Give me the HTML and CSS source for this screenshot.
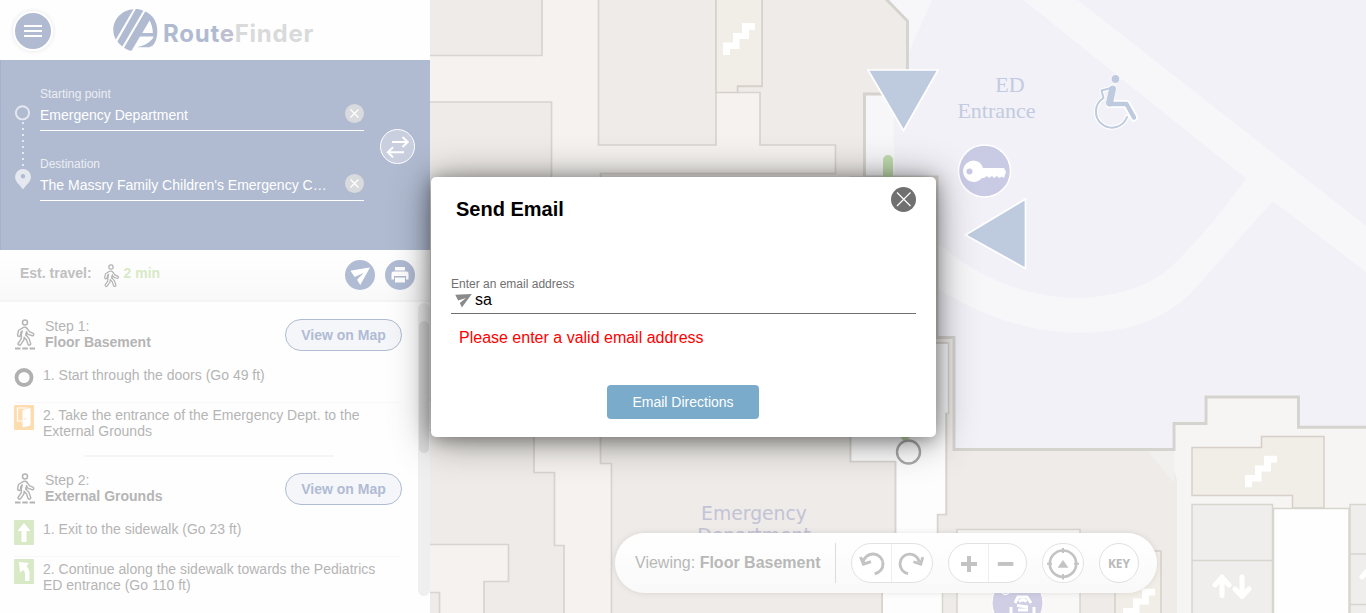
FILE: index.html
```html
<!DOCTYPE html>
<html lang="en">
<head>
<meta charset="utf-8">
<title>RouteFinder</title>
<link rel="stylesheet" href="styles.css">
</head>
<body>
<svg class="defs" width="0" height="0">
  <symbol id="stairs" viewBox="0 0 32 32"><path d="M0 19.5H10V10H19V0H32V7H26V16H16.5V26H7V32H0Z" fill="#fff"/></symbol>
  <symbol id="walker" viewBox="0 0 20 28">
    <g fill="none" stroke-linejoin="round" stroke-linecap="round">
      <circle cx="10" cy="3.500" r="2.500" stroke="#b4b4b4" stroke-width="1.500"/>
      <g stroke="#b4b4b4"><path d="M9.800 10.500 8.500 16" stroke-width="6"/><path d="M8.500 10 4.800 12.200 4 16M11.500 11 13.800 14 17.300 15.400M8 16.500 7.500 20.500 4.500 24.800M9.500 16.500 12.800 20.300 14.300 24.800" stroke-width="4.200"/></g>
      <g stroke="#fdfdfd"><path d="M9.800 10.500 8.500 16" stroke-width="3.200"/><path d="M8.500 10 4.800 12.200 4 16M11.500 11 13.800 14 17.300 15.400M8 16.500 7.500 20.500 4.500 24.800M9.500 16.500 12.800 20.300 14.300 24.800" stroke-width="1.400"/></g>
      <path d="M7 12 6.300 16M11.800 12.500 10.800 16.500" stroke="#b4b4b4" stroke-width="1.200"/>
    </g>
  </symbol>
  <symbol id="plane" viewBox="0 0 20 17"><path d="M0 1 20 0 8 16.500 5.500 10.800 13 4.800 3.500 7.800Z"/></symbol>
</svg>
<div class="app">
  <aside class="sidebar">
    <header class="brand">
      <button class="menu" aria-label="Menu"><span></span><span></span><span></span></button>
      <div class="logo">
        <svg width="45" height="43" viewBox="0 0 45 43">
          <path d="M20.500.2C9 .8.300 10 .3 21c0 3.500.8 6.300 2.500 9.500ZM22.800.1 4.400 32.600c1.600 2.200 3 3.500 4.900 4.900L30.300 1.700C28 .6 25.500.1 22.800.1ZM32.200 2.500 11 38.800c2.200 1.600 4.800 2.700 7.500 3L27 27.500H40.500L38.500 37.800C42.500 34 44.300 29 44.300 22 44.300 12.500 39.500 5.500 32.200 2.500Z" fill="#b0bbd1"/>
          <path d="M29.300 24 36.600 11.500Q39.700 17 39.800 24Z" fill="#fff"/>
          <path d="M41 27.500C38 33 31 37 24 38.200H36.500L40 36Z" fill="#b0bbd1"/>
        </svg>
        <div class="logo-text">Rout<span class="mid">e</span><span class="gray">Finder</span></div>
      </div>
    </header>
    <section class="search">
      <svg class="route-line" width="18" height="90" viewBox="0 0 18 90">
        <circle cx="8.500" cy="8.800" r="6.600" fill="none" stroke="#e5e8ef" stroke-width="1.900"/>
        <path d="M9 18V64" stroke="#e5e8ef" stroke-width="2" stroke-dasharray="2 4"/>
        <path fill-rule="evenodd" d="M9 65a7.900 7.900 0 0 0-7.900 7.900C1.100 78 5.500 80 9 85.500 12.500 80 16.900 78 16.900 72.900A7.900 7.900 0 0 0 9 65Zm0 5a2.200 2.200 0 1 1 0 4.400 2.200 2.200 0 0 1 0-4.400Z" fill="#e5e8ef"/>
      </svg>
      <div class="fields">
        <div class="field"><label>Starting point</label><div class="value"><span>Emergency Department</span>
          <svg width="19" height="19" viewBox="0 0 19 19"><circle cx="9.500" cy="9.500" r="9.500" fill="#d9dadd"/><path d="M5.500 5.500 13.500 13.500M13.500 5.500 5.500 13.500" stroke="#fff" stroke-width="1.200"/></svg></div></div>
        <div class="field"><label>Destination</label><div class="value"><span>The Massry Family Children's Emergency C…</span>
          <svg width="19" height="19" viewBox="0 0 19 19"><circle cx="9.500" cy="9.500" r="9.500" fill="#d9dadd"/><path d="M5.500 5.500 13.500 13.500M13.500 5.500 5.500 13.500" stroke="#fff" stroke-width="1.200"/></svg></div></div>
      </div>
      <svg class="swap" width="35" height="35" viewBox="0 0 35 35"><circle cx="17.500" cy="17.500" r="17" fill="#cacfdf" stroke="#fff"/><path d="M12 13H27.500M22.500 8 27.800 13 22.500 18M24 23.300H8M13 18.300 7.800 23.300 13 28.300" fill="none" stroke="#fff" stroke-width="1.900"/></svg>
    </section>
    <section class="travel">
      <b>Est. travel:</b>
      <svg class="travel-icon" width="18" height="24"><use href="#walker"/></svg>
      <b class="mins">2 min</b>
      <svg class="round" width="30" height="30" viewBox="0 0 30 30"><circle cx="15" cy="15" r="15" fill="#b0bbd4"/><g transform="rotate(-7 15 15)"><use href="#plane" x="6" y="8.500" width="20" height="17" fill="#fff"/></g></svg>
      <svg class="round" width="30" height="30" viewBox="0 0 30 30"><circle cx="15" cy="15" r="15" fill="#b0bbd4"/><path d="M10 7H20V10.500H10ZM8.500 11.500H21.500Q23.500 11.500 23.500 13.500V19.500H21V16H9V19.500H6.500V13.500Q6.500 11.500 8.500 11.500ZM10 17.500H20V22.500H10Z" fill="#fff"/></svg>
    </section>
    <section class="steps">
      <div class="scroll"><i></i></div>
      <div class="step-head">
        <svg width="20" height="31" viewBox="0 0 20 31"><use href="#walker" width="20" height="28"/><path d="M0 29.500H20" stroke="#b4b4b4" stroke-width="1.800" stroke-dasharray="5.500 1.800"/></svg>
        <div class="title">Step 1:<b>Floor Basement</b></div><button class="view">View on Map</button>
      </div>
      <div class="item first"><svg width="20" height="25" viewBox="0 0 20 25"><circle cx="10" cy="11.500" r="7.500" fill="none" stroke="#b0b0b0" stroke-width="3.800"/></svg><p>1. Start through the doors (Go 49 ft)</p></div>
      <div class="item"><svg width="20" height="25" viewBox="0 0 20 25"><rect width="20" height="25" rx="1" fill="#fdddb0"/><path d="M8 16H3.500V3H13.500" fill="none" stroke="#fff" stroke-width="1.200"/><path d="M8.500 5 16.500 3V20.500L8.500 22.500Z" fill="#fff"/><circle cx="11" cy="14" r=".8" fill="#fdddb0"/></svg><p>2. Take the entrance of the Emergency Dept. to the External Grounds</p></div>
      <div class="rule"></div>
      <div class="step-head">
        <svg width="20" height="31" viewBox="0 0 20 31"><use href="#walker" width="20" height="28"/><path d="M0 29.500H20" stroke="#b4b4b4" stroke-width="1.800" stroke-dasharray="5.500 1.800"/></svg>
        <div class="title">Step 2:<b>External Grounds</b></div><button class="view">View on Map</button>
      </div>
      <div class="item first"><svg width="20" height="25" viewBox="0 0 20 25"><rect width="20" height="25" rx="1" fill="#d8e9c6"/><path d="M10 3 16.500 11H12.500V22H7.500V11H3.500Z" fill="#fff"/></svg><p>1. Exit to the sidewalk (Go 23 ft)</p></div>
      <div class="item last"><svg width="20" height="25" viewBox="0 0 20 25"><rect width="20" height="25" rx="1" fill="#d8e9c6"/><path d="M5 3 15 4 12.500 7.500Q15.500 10 15.500 14V22H11V15Q11 12 9 11L6 13.500Z" fill="#fff"/></svg><p>2. Continue along the sidewalk towards the Pediatrics ED entrance (Go 110 ft)</p></div>
    </section>
  </aside>
  <main class="map">
    <svg width="936" height="613" viewBox="430 0 936 613">
      <rect x="430" width="936" height="613" fill="#f5f2ef"/>
      <!-- rooms -->
      <g fill="#eeebe8" stroke="#d8d4d1" stroke-width="1.700">
        <path d="M420-5H542V55.500H420ZM420 102H551.500V400H420ZM598.500-5H716V145H598.500Z"/>
        <path d="M762-5V86.500H737.500V92.500H760V145H835.500V173.500H600.500V463.500H611.500V620H882.500V540H895.500V461.500H850.500V177H864V94H908V21L887-5Z"/>
        <path d="M420 430H534V472.500H554.500V545.500H564V620H484V581.500H508.500V544.500H420ZM420 592.500H439.500V620H420Z"/>
        <path d="M930 337H960V449H1185V620H942V540H937.500V514.500H946.500V343H930Z"/>
      </g>
      <path d="M851.500 430H936V343.500H948V413H946V514H937V540H942V613H883V540H896.500V461H851.500Z" fill="#fdfdfd"/>
      <path d="M936 343H948.500V413.500H946V514.500H937.500V540H942.500V613M882 613V540H895.500V461.500H850.500V430" fill="none" stroke="#d8d5d0" stroke-width="1.500"/>
      <path d="M1174 424H1206V397H1298V427H1370V620H1177V480L1174 470Z" fill="#f6f5f3"/>
      <path d="M1147 450H1174V483Z" fill="#f1f0ee"/>
      <!-- grounds and roads -->
      <path d="M887-2 907.500 21V94H864.500V177H937V337.500H954V449.500H1174V423.500H1206V397H1298.500V427.200H1370V-2Z" fill="#f2f1f7"/>
      <g fill="#f7f7fa">
        <path d="M1021-2H1075L1366 226V272L1273 201 1192 292C1162 322 1122 333 1078 333 1025 332 978 314 937 288V242C975 276 1025 298 1080 298 1115 296 1146 288 1170 268Q1206 234 1246 178.500Z"/>
        <path d="M889 0H932L909 52V21ZM866 95H900Q892 110 893.500 140L895 177H866Z"/>
      </g>
      <path d="M885-2 907.500 21V94H864.500V177H937V337.500H954V449.500H1174V423.500H1206V397H1298.500V427.200H1370" fill="none" stroke="#d5d3cd" stroke-width="2.900"/>
      <rect x="883" y="155" width="10" height="40" rx="5" fill="#c0dbae"/>
      <!-- stairwells, lifts and small rooms -->
      <g fill="#f0eee6" stroke="#d6cfca" stroke-width="1.500">
        <path d="M716-5V92.500H737.500V86H762V-5ZM1192 447.500H1261.500V436.500H1324V508H1292.500V495.500H1192ZM1115 551H1161V620H1115Z"/>
      </g>
      <g fill="#efeeed" stroke="#d8d5ce" stroke-width="1.500">
        <path d="M1192 504.500H1272.500V560.500H1192ZM1192 560.500H1272.500V620H1192ZM1350 504.500H1370V554H1350ZM1350 554H1370V604.500H1350ZM1350 604.500H1370V620H1350Z"/>
        <path d="M1273.500 508.500H1349V620H1273.500Z" fill="#fefefe"/>
        <path d="M957 529.500H1080V620H957Z" fill="#faf8f6"/>
      </g>
      <use href="#stairs" x="723" y="23" width="32" height="32"/><use href="#stairs" x="1245" y="455.500" width="32" height="32"/><use href="#stairs" x="1123" y="588.500" width="32" height="32"/>
      <path d="M1222 595.500V577M1215 585 1222 577.500 1229 585M1242 577V595.500M1235 589 1242 596.500 1249 589M1362 577L1370 568" fill="none" stroke="#fff" stroke-width="5" stroke-linecap="round" stroke-linejoin="round"/>
      <!-- map markers -->
      <g fill="#becbdf" stroke="#fff" stroke-width="1.700">
        <path d="M868 70H938L903.500 130.500ZM1025.500 199V268.500L965.500 235Z"/>
      </g>
      <text x="1010" y="92" text-anchor="middle" class="serif">ED</text><text x="996.500" y="118" text-anchor="middle" class="serif">Entrance</text>
      <g fill="none" stroke-linecap="round" stroke-linejoin="round">
        <g stroke="#fff"><path d="M1112.500 88.500 1109.500 104H1126.500L1134 117.500" stroke-width="8"/><path d="M1111 88 1101.500 90.500 1103.500 98A16 16 0 1 0 1127 117" stroke-width="4.200"/></g>
        <g stroke="#becbdf"><path d="M1111 88 1101.500 90.500 1103.500 98A16 16 0 1 0 1127 117" stroke-width="2"/><path d="M1109.500 104H1126.500L1134 117.500" stroke-width="4.500"/><path d="M1112.500 89 1109.500 103" stroke-width="7"/></g>
        <circle cx="1115.500" cy="79" r="4.500" fill="#becbdf" stroke="#fff"/>
      </g>
      <circle cx="984.500" cy="171" r="26" fill="#c9cae4" stroke="#fff" stroke-width="1.500"/>
      <path fill-rule="evenodd" d="M973.500 160.500A10.700 10.700 0 1 0 982 178H984L987 176 989 178 992 176 994 178 997 176 999 178 1002 176.500 1004 178 1006 172 1004 168H983A10.700 10.700 0 0 0 973.500 160.500ZM969.500 168.500A3 3 0 1 1 969.500 174.500 3 3 0 0 1 969.500 168.500Z" fill="#fff"/>
      <text x="754" y="520" text-anchor="middle" class="room">Emergency</text><text x="754" y="542" text-anchor="middle" class="room">Department</text>
      <circle cx="1017.500" cy="603" r="25.500" fill="#cfcee4" stroke="#fff"/>
      <path d="M1015 603 1018 597H1027L1031 603M1019 601.500Q1023 598.500 1026.500 601.500M1017 605.500 1028 607M1018 610H1028M1011 607V613M1034 607V613" fill="none" stroke="#fff" stroke-width="3"/><circle cx="1005.500" cy="590.500" r="4" fill="none" stroke="#fff" stroke-width="1.300"/>
      <path d="M900 436Q903 441 905 442L911 436" fill="#b9d6a5"/><circle cx="908.500" cy="452" r="11.500" fill="#fff" fill-opacity=".5" stroke="#aaa9a9" stroke-width="2.400"/>
    </svg>
    <div class="toolbar">
      <span class="viewing">Viewing: <b>Floor Basement</b></span><i class="sep"></i>
      <div class="pill undo">
        <svg width="39" height="38" viewBox="0 0 39 38"><path d="M11.200 18A10 10 0 1 1 22.700 29.800M8.500 13 11.500 20.200 19 17.700" fill="none" stroke="#c3c3c3" stroke-width="2.900"/></svg>
        <svg width="41" height="38" viewBox="0 0 41 38"><path d="M28 18A10 10 0 1 0 16.500 29.800M31.500 13 29.500 20.200 22 17.700" fill="none" stroke="#c3c3c3" stroke-width="2.900"/></svg>
      </div>
      <div class="pill zoom">
        <svg width="39" height="38" viewBox="0 0 39 38"><path d="M12 20H28M20 12V28" stroke="#c3c3c3" stroke-width="4"/></svg>
        <svg width="38" height="38" viewBox="0 0 38 38"><path d="M9 20H25" stroke="#c3c3c3" stroke-width="4"/></svg>
      </div>
      <svg class="locate" width="42" height="40" viewBox="0 0 42 40"><rect x=".5" y=".5" width="41" height="39" rx="19.500" fill="#fff" stroke="#e2e2e2"/><circle cx="21" cy="20.700" r="13.200" fill="none" stroke="#c3c3c3" stroke-width="2.600"/><path d="M21 5V10M21 31V36.500M5 20.700H10M32 20.700H37" stroke="#c3c3c3" stroke-width="2"/><path d="M21 17 26.500 24.700H15.500Z" fill="#c3c3c3"/></svg>
      <button class="key">KEY</button>
    </div>
  </main>
  <div class="dialog" role="dialog">
    <div class="dialog-head"><h2>Send Email</h2>
      <svg width="25" height="25" viewBox="0 0 25 25"><circle cx="12.500" cy="12.500" r="12.500" fill="#707070"/><path d="M6 5.500 19.500 19M19.500 5.500 6 19" stroke="#fff" stroke-width="1.200"/></svg>
    </div>
    <label class="email-label">Enter an email address</label>
    <div class="email"><svg width="17" height="14"><use href="#plane" fill="#8a8a8a"/></svg><span>sa</span></div>
    <p class="error">Please enter a valid email address</p>
    <button class="submit">Email Directions</button>
  </div>
</div>
</body>
</html>
```
FILE: styles.css
```css
* { box-sizing: border-box; }
body { margin: 0; font-family: "Liberation Sans", Arial, sans-serif; background: #fff; overflow: hidden; }
button { font: inherit; padding: 0; }
svg { display: block; flex: none; }
p, h2 { margin: 0; }
.defs { position: absolute; }
.app { display: flex; width: 1366px; height: 613px; position: relative; overflow: hidden; }

.sidebar { width: 430px; height: 613px; display: flex; flex-direction: column; background: #fefefe; overflow: hidden; }
.brand { height: 60px; display: flex; align-items: flex-start; padding: 9px 0 0 13px; }
.menu { width: 40px; height: 40px; margin-top: 2px; border: 2px solid #fff; border-radius: 50%; background: #b0bbd1; box-shadow: 0 0 5px rgba(0,0,0,.1); display: flex; flex-direction: column; align-items: center; justify-content: center; gap: 3px; }
.menu span { width: 18px; height: 2px; background: #fff; }
.logo { display: flex; margin-left: 60px; gap: 5px; }
.logo-text { font: 700 24px/30px Inter, sans-serif; color: #b0bbd1; letter-spacing: .75px; padding-top: 10px; }
.logo-text .mid { color: #bfbfcf; }
.logo-text .gray { color: #d9dadb; }

.search { height: 190px; background: #b0bbd1; border-left: 1px solid #a5b0cf; display: flex; padding: 26px 15px 0 13px; }
.route-line { margin-top: 18px; }
.fields { width: 324px; margin-left: 8px; }
.field { height: 70px; color: #eceef3; }
.field label { display: block; font-size: 12px; line-height: 16px; }
.value { height: 29px; display: flex; justify-content: space-between; border-bottom: 1px solid #fff; color: #fff; font-size: 14px; line-height: 26px; }
.value svg { margin-top: 2px; }
.swap { margin: 43px 0 0 16px; }

.travel { height: 52px; display: flex; padding: 10px 15px 0 20px; background: linear-gradient(#fff, #f9f9f9); border-bottom: 2px solid #f4f4f4; color: #c0c0c0; font-size: 14px; line-height: 27px; }
.travel-icon { margin: 4px 0 0 10px; }
.mins { color: #d8e9c6; margin: 0 auto 0 4px; }
.round + .round { margin-left: 10px; }

.steps { position: relative; height: 311px; padding: 16px 0 0 15px; color: #b5b5b5; font-size: 14px; line-height: 16px; }
.step-head { height: 40px; display: flex; width: 387px; }
.step-head > svg { margin-top: 1px; }
.title { margin-left: 10px; flex: 1; }
.title b { display: block; }
.view { width: 117px; height: 32px; margin-top: 1px; border: 1px solid #b0bbd4; border-radius: 16px; background: #f5f6fa; color: #b0bbd4; font-weight: bold; font-size: 14px; }
.item { display: flex; width: 387px; height: 50px; margin-left: -1px; padding-top: 3px; }
.item p { margin: 2px 0 0 9px; width: 350px; }
.item.first { height: 45px; padding-top: 9px; margin-bottom: -1px; border-bottom: 1px solid #f8f8f8; }
.item.first svg { margin-top: -1px; }
.item.first p { margin-top: 0; }
.rule { width: 250px; height: 2px; margin: 3px 0 15px 69px; background: #f5f5f5; }
.scroll { position: absolute; right: 0; top: 1px; width: 12px; height: 293px; border-radius: 6px; background: #efefef; }
.scroll i { display: block; width: 10px; height: 132px; margin: 18px 1px; border-radius: 5px; background: #dcdcdc; }

.map { position: relative; width: 936px; height: 613px; overflow: hidden; }
.serif { font: 22px "Liberation Serif", serif; fill: #c2cbe0; }
.room { font: 18.800px "DejaVu Sans", sans-serif; fill: #c3c3d6; }
.toolbar { position: absolute; left: 185px; top: 533px; width: 542px; height: 60px; display: flex; align-items: center; padding-left: 20px; border-radius: 30px; background: linear-gradient(#fff, #f9f9f9); box-shadow: 0 0 6px rgba(0,0,0,.1); color: #b8b8b8; font-size: 16px; }
.viewing { width: 200px; white-space: nowrap; }
.sep { width: 1px; height: 40px; background: #dcdcdc; }
.pill { display: flex; height: 40px; border: 1px solid #e2e2e2; border-radius: 20px; background: #fff; }
.pill svg + svg { border-left: 1px solid #eee; }
.undo { width: 82px; margin-left: 15px; }
.zoom { width: 79px; margin-left: 15px; }
.locate { margin-left: 15px; }
.key { width: 40px; height: 40px; margin-left: 15px; border: 1px solid #e0e0e0; border-radius: 50%; background: #fff; color: #b9b9b9; font: bold 12px "Noto Sans", sans-serif; }

.dialog { position: absolute; left: 431px; top: 177px; width: 505px; height: 260px; padding: 10px 20px 0; border-radius: 5px; background: #fff; box-shadow: 0 2px 18px rgba(0,0,0,.35), 0 3px 40px rgba(0,0,0,.42); display: flex; flex-direction: column; }
.dialog-head { height: 90px; display: flex; justify-content: space-between; padding-left: 5px; }
.dialog-head h2 { font-size: 20px; line-height: 24px; padding-top: 10px; }
.email-label { font-size: 12px; line-height: 14px; color: #707070; }
.email { height: 23px; display: flex; align-items: flex-start; padding-left: 4px; border-bottom: 1px solid #707070; font-size: 16px; line-height: 18px; }
.email svg { margin: 3px 3px 0 0; }
.error { margin: 14px 0 0 8px; color: #f00; font-size: 16px; line-height: 20px; }
.submit { width: 152px; height: 34px; margin: 37px 0 0 156px; border: 0; border-radius: 4px; background: #7aabca; color: #fff; font-size: 14px; }
```
